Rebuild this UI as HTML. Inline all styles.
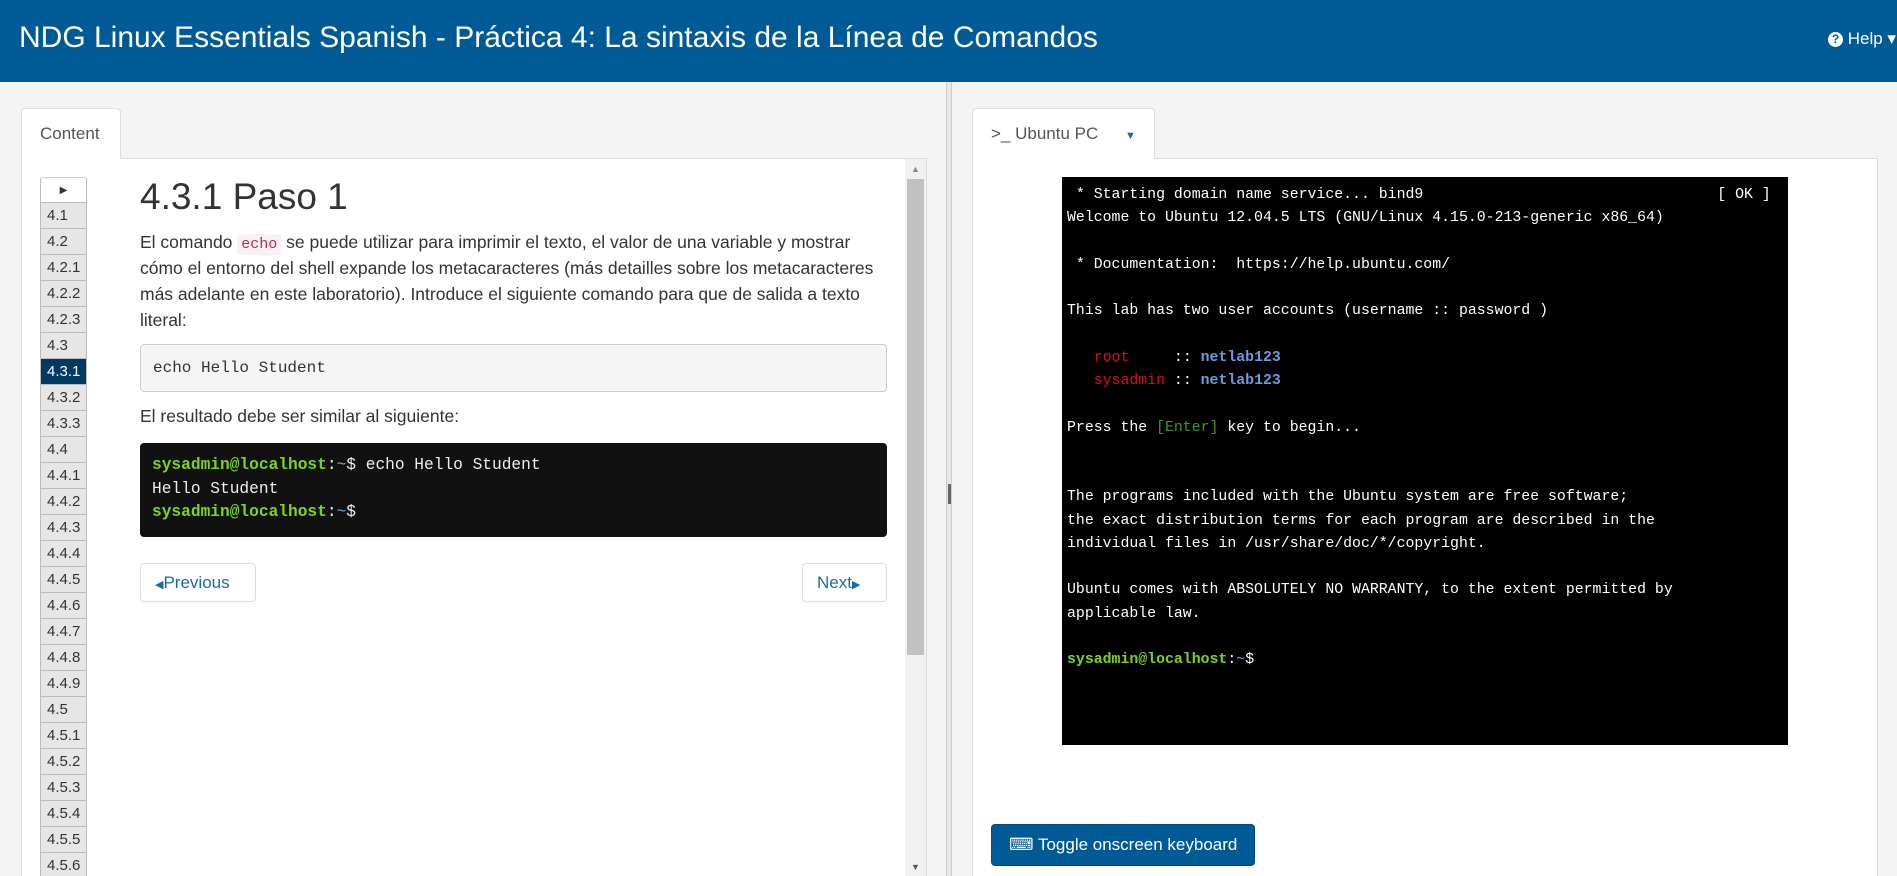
<!DOCTYPE html>
<html style="width:1897px;height:876px;overflow:hidden"><head><meta charset="utf-8"><style>
*{box-sizing:border-box;margin:0;padding:0}
body{width:1897px;height:876px;overflow:hidden;background:#f4f4f4;font-family:"Liberation Sans",Arial,sans-serif;position:relative;color:#333}
.hdr{position:absolute;left:0;top:0;width:1897px;height:82px;background:#005a96}
.hdr h1{position:absolute;left:19px;top:21px;font-weight:normal;font-size:30px;color:#fff;white-space:nowrap}
.help{position:absolute;left:1828px;top:29px;color:#fff;font-size:17px;white-space:nowrap}
.help b{display:inline-block;width:15px;height:15px;border-radius:50%;background:#fff;color:#005a96;font-size:12px;text-align:center;line-height:15px;vertical-align:1px}
.divider{position:absolute;left:946px;top:82px;width:6px;height:794px;background:#e8e8e8;border-left:1px solid #ccc;border-right:1px solid #ccc}
.divider i{position:absolute;left:1px;top:402px;width:3px;height:20px;background:#666}
.tab{position:absolute;background:#fff;border:1px solid #ddd;border-bottom:none;border-radius:4px 4px 0 0;font-size:17px;color:#555}
.panel{position:absolute;background:#fff;border:1px solid #ddd;border-bottom:none}
.sb{position:absolute;left:905px;top:159px;width:21px;height:717px;background:#f1f1f1}
.sb .th{position:absolute;left:2px;top:20px;width:17px;height:476px;background:#c1c1c1}
.nav{position:absolute;left:40px;top:177px;width:47px;height:699px;overflow:hidden}
.nav div{height:26px;border:1px solid #bbb;border-top:none;background:#e6e6e6;font-size:15px;line-height:25px;padding-left:6px;color:#333}
.nav .top{background:#fff;border-top:1px solid #ccc;border-radius:3px 3px 0 0;text-align:center;padding:0;font-size:10px}
.nav .act{background:#003a63;color:#fff}
h2{position:absolute;left:140px;top:176px;font-size:37px;font-weight:normal;color:#333}
p.t{position:absolute;left:140px;font-size:17.5px;line-height:26px;width:747px;color:#333}
code.e{font-family:"Liberation Mono",monospace;color:#c7254e;background:#f9f2f4;font-size:15px;line-height:15px;padding:2px 4px;border-radius:3px}
.cb{position:absolute;left:140px;top:344px;width:747px;height:48px;background:#f5f5f5;border:1px solid #ccc;border-radius:4px;font-family:"Liberation Mono",monospace;font-size:16px;line-height:46px;padding-left:12px;color:#333}
.out{position:absolute;left:140px;top:443px;width:747px;height:94px;background:#111;border-radius:4px;font-family:"Liberation Mono",monospace;font-size:16.2px;line-height:23.5px;padding:11px 12px;color:#eee;white-space:pre}
.g{color:#7ed321;font-weight:bold}.b{color:#6fa8dc}
.btn{position:absolute;top:563px;height:39px;border:1px solid #ddd;border-radius:4px;background:#fff;color:#1a6aa8;font-size:17px;line-height:37px;padding:0 14px}
.term{position:absolute;left:1062px;top:177px;width:726px;height:568px;background:#000;font-family:"Liberation Mono",monospace;font-size:14.85px;line-height:23.25px;color:#fff;padding:7px 5px;white-space:pre;overflow:hidden}
.r{color:#e01010}.bl{color:#6b9be0;font-weight:bold}.gr{color:#3a9a2a}.lg{color:#7ed321;font-weight:bold}
.tog{position:absolute;left:991px;top:824px;width:264px;height:42px;background:#005a96;border:1px solid #004b80;border-radius:4px;color:#fff;font-size:17px;line-height:40px;padding-left:17px}
</style></head><body>
<div class="hdr"><h1>NDG Linux Essentials Spanish - Práctica 4: La sintaxis de la Línea de Comandos</h1>
<div class="help"><b>?</b> Help ▾</div></div>
<div class="divider"><i></i></div>

<div class="panel" style="left:21px;top:158px;width:906px;height:718px"></div>
<div class="tab" style="left:21px;top:108px;width:100px;height:51px;line-height:50px;padding-left:18px">Content</div>
<div class="sb"><div style="position:absolute;left:6px;top:5px;font-size:9px;color:#888">▲</div><div class="th"></div><div style="position:absolute;left:6px;top:703px;font-size:9px;color:#555">▼</div></div>

<div class="nav">
<div class="top">▶</div>
<div>4.1</div><div>4.2</div><div>4.2.1</div><div>4.2.2</div><div>4.2.3</div><div>4.3</div><div class="act">4.3.1</div><div>4.3.2</div><div>4.3.3</div><div>4.4</div><div>4.4.1</div><div>4.4.2</div><div>4.4.3</div><div>4.4.4</div><div>4.4.5</div><div>4.4.6</div><div>4.4.7</div><div>4.4.8</div><div>4.4.9</div><div>4.5</div><div>4.5.1</div><div>4.5.2</div><div>4.5.3</div><div>4.5.4</div><div>4.5.5</div><div>4.5.6</div><div>4.5.7</div>
</div>

<h2>4.3.1 Paso 1</h2>
<p class="t" style="top:229px">El comando <code class="e">echo</code> se puede utilizar para imprimir el texto, el valor de una variable y mostrar cómo el entorno del shell expande los metacaracteres (más detailles sobre los metacaracteres más adelante en este laboratorio). Introduce el siguiente comando para que de salida a texto literal:</p>
<div class="cb">echo Hello Student</div>
<p class="t" style="top:403px">El resultado debe ser similar al siguiente:</p>
<div class="out"><span class="g">sysadmin@localhost</span>:<span class="b">~</span>$ echo Hello Student
Hello Student
<span class="g">sysadmin@localhost</span>:<span class="b">~</span>$</div>
<div class="btn" style="left:140px;width:116px"><span style="font-size:11px">◀</span>Previous</div>
<div class="btn" style="left:802px;width:85px">Next<span style="font-size:11px">▶</span></div>

<div class="panel" style="left:972px;top:158px;width:906px;height:718px"></div>
<div class="tab" style="left:972px;top:108px;width:183px;height:51px;line-height:50px;padding-left:18px">&gt;_ Ubuntu PC <span style="color:#1a6aa8;font-size:11px;margin-left:22px">▼</span></div>
<div class="term"> * Starting domain name service... bind9                                 [ OK ]
Welcome to Ubuntu 12.04.5 LTS (GNU/Linux 4.15.0-213-generic x86_64)

 * Documentation:  https://help.ubuntu.com/

This lab has two user accounts (username :: password )

   <span class="r">root</span>     :: <span class="bl">netlab123</span>
   <span class="r">sysadmin</span> :: <span class="bl">netlab123</span>

Press the <span class="gr">[Enter]</span> key to begin...


The programs included with the Ubuntu system are free software;
the exact distribution terms for each program are described in the
individual files in /usr/share/doc/*/copyright.

Ubuntu comes with ABSOLUTELY NO WARRANTY, to the extent permitted by
applicable law.

<span class="lg">sysadmin@localhost</span>:<span class="b">~</span>$</div>
<div class="tog">⌨ Toggle onscreen keyboard</div>
</body></html>
